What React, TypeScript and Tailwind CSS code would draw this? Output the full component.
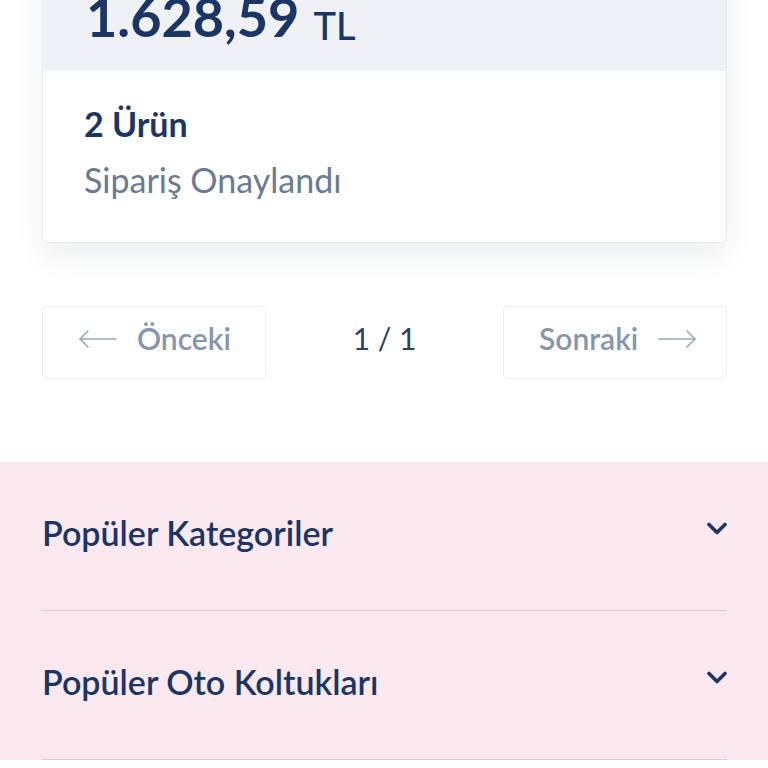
import React from "react";

const LongArrow = ({ dir }: { dir: "left" | "right" }) => (
  <svg width="40" height="20" viewBox="0 0 40 20" fill="none" stroke="#9aa6b8" strokeWidth="1.6" strokeLinecap="round" strokeLinejoin="round">
    {dir === "left" ? (
      <>
        <path d="M2 10h36" />
        <path d="M10 2L2 10l8 8" />
      </>
    ) : (
      <>
        <path d="M2 10h36" />
        <path d="M30 2l8 8-8 8" />
      </>
    )}
  </svg>
);

const Chevron = () => (
  <svg width="20" height="14" viewBox="0 0 20 14" fill="none" stroke="#1b3664" strokeWidth="3.6" strokeLinecap="round" strokeLinejoin="round">
    <path d="M2 2.5l8 8 8-8" />
  </svg>
);

const sections = ["Popüler Kategoriler", "Popüler Oto Koltukları"];

export default function App() {
  return (
    <div className="h-[768px] w-[768px] overflow-hidden bg-white font-['Lato','Open_Sans',sans-serif]">
      <div className="pl-[42px] pr-[41px]">
        <div className="-mt-[40px] overflow-hidden rounded-b-md border border-[#e9ebef] bg-white shadow-[0_12px_28px_rgba(30,40,60,0.08)]">
          <div className="flex h-[110px] items-end bg-[#f0f1f4] px-[43px] pb-[27px]">
            <span className="text-[54px] font-bold leading-none text-[#1b3664]">1.628,59</span>
            <span className="ml-[14px] text-[38px] font-medium leading-none text-[#1b3664]">TL</span>
          </div>
          <div className="flex h-[171px] flex-col px-[41px] pt-[35px]">
            <div className="text-[34px] font-bold leading-[36px] text-[#1b3664]">2 Ürün</div>
            <div className="mt-[20px] text-[34px] leading-[36px] text-[#6a7a92]">Sipariş Onaylandı</div>
          </div>
        </div>

        <div className="mt-[63px] flex items-center justify-between">
          <button className="flex h-[73px] w-[224px] items-center gap-[19px] rounded border border-[#eceef2] bg-white pb-[8px] pl-[35px]">
            <LongArrow dir="left" />
            <span className="text-[30px] font-semibold text-[#8796ac]">Önceki</span>
          </button>
          <span className="mb-[8px] text-[30px] text-[#2b4268]">1 / 1</span>
          <button className="flex h-[73px] w-[224px] items-center gap-[19px] rounded border border-[#eceef2] bg-white pb-[8px] pl-[35px]">
            <span className="text-[30px] font-semibold text-[#8796ac]">Sonraki</span>
            <LongArrow dir="right" />
          </button>
        </div>
      </div>

      <div className="mt-[83px] bg-[#fce9f0] pl-[42px] pr-[41px]">
        {sections.map((s) => (
          <div key={s} className="flex h-[149px] items-center justify-between border-b-[1.5px] border-[#ddc9d1] pb-[8px]">
            <span className="text-[34px] font-semibold text-[#1b3664]">{s}</span>
            <span className="mb-[6px]">
              <Chevron />
            </span>
          </div>
        ))}
      </div>
    </div>
  );
}
